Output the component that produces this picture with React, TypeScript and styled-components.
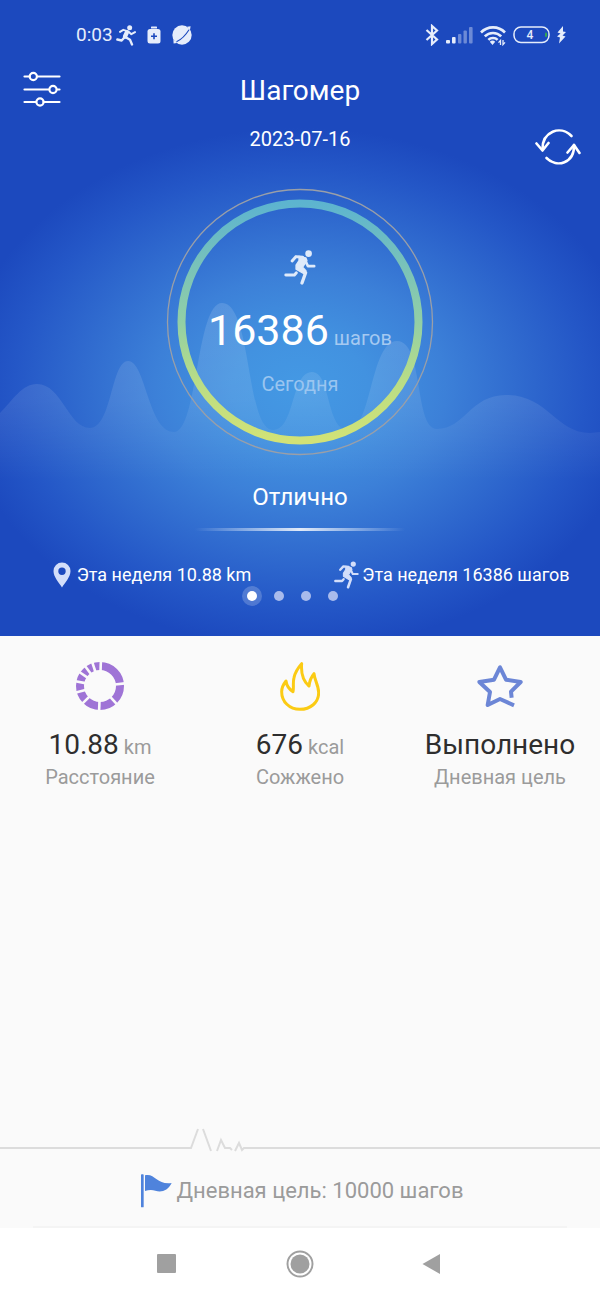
import React from 'react';
import styled, { createGlobalStyle } from 'styled-components';

const GlobalStyle = createGlobalStyle`
  * { box-sizing: border-box; }
  body { margin: 0; background: #fafafa; font-family: Roboto, sans-serif; }
  button { border: 0; padding: 0; background: none; color: inherit; font: inherit; cursor: pointer; }
  svg { display: block; flex: none; }
`;

const Screen = styled.main`
  min-height: 100vh;
  display: flex;
  flex-direction: column;
  background: #fafafa;
`;

const Hero = styled.section`
  position: relative;
  isolation: isolate;
  display: flex;
  flex-direction: column;
  color: #fff;
  padding-bottom: 30px;
  background: radial-gradient(
    ellipse 340px 260px at 50% 388px,
    #4499e4 0,
    #4292e0 20%,
    #3c80d8 43%,
    #306bcf 64%,
    #2457c7 84%,
    #1c49be 100%
  );
`;

const Waves = styled.svg`
  position: absolute;
  z-index: -1;
  left: 0;
  top: 290px;
  width: 100%;
  height: 190px;
`;

const StatusBar = styled.div`
  height: 70px;
  padding: 0 34px 0 76px;
  display: flex;
  justify-content: space-between;
  align-items: center;
  color: #e6edfb;
`;

const StatusGroup = styled.div<{ $gap: number }>`
  display: flex;
  align-items: center;
  gap: ${(p) => p.$gap}px;
`;

const Clock = styled.time`
  font-size: 19px;
  line-height: 24px;
  margin-right: -8px;
`;

const TitleRow = styled.header`
  display: grid;
  grid-template-columns: 60px 1fr 60px;
  align-items: center;
  height: 42px;
  padding: 0 20px;
`;

const Title = styled.h1`
  margin: 0;
  font-size: 28px;
  line-height: 32px;
  font-weight: 400;
  text-align: center;
`;

const DateRow = styled.div`
  display: grid;
  grid-template-columns: 60px 1fr 60px;
  height: 54px;
  padding: 0 20px;
  align-items: center;
`;

const DateText = styled.time`
  grid-column: 2;
  text-align: center;
  font-size: 20px;
  line-height: 24px;
`;

const IconButton = styled.button<{ $end?: boolean }>`
  display: flex;
  width: 44px;
  height: 38px;
  align-items: center;
  justify-content: center;
  justify-self: ${(p) => (p.$end ? 'end' : 'start')};
  align-self: ${(p) => (p.$end ? 'end' : 'start')};
`;

const Dial = styled.div`
  display: grid;
  justify-items: center;
  margin-top: 22px;

  > * { grid-area: 1 / 1; }
`;

const DialContent = styled.div`
  display: flex;
  flex-direction: column;
  align-items: center;
  padding-top: 62px;
`;

const Steps = styled.p`
  margin: 21px 0 0;
  font-size: 43px;
  line-height: 48px;
`;

const StepsUnit = styled.span`
  font-size: 20px;
  line-height: 24px;
  margin-left: 5px;
  color: #a5c9f1;
`;

const Today = styled.p`
  margin: 18px 0 0;
  font-size: 20px;
  line-height: 24px;
  color: #9ac5f0;
`;

const Rating = styled.p`
  margin: 26px 0 0;
  text-align: center;
  font-size: 24px;
  line-height: 30px;
`;

const Glow = styled.div`
  align-self: center;
  width: 210px;
  height: 3px;
  margin-top: 16px;
  background: linear-gradient(90deg, transparent, rgba(255, 255, 255, 0.85) 50%, transparent);
`;

const WeekRow = styled.div`
  display: grid;
  grid-template-columns: 1fr 1fr;
  height: 24px;
  margin-top: 30px;
`;

const WeekItem = styled.div<{ $gap: number }>`
  display: flex;
  align-items: center;
  justify-content: center;
  gap: ${(p) => p.$gap}px;
  padding-left: 4px;
  font-size: 18px;
  line-height: 24px;
  white-space: nowrap;
`;

const Dots = styled.nav`
  display: flex;
  justify-content: center;
  gap: 7px;
  margin-top: 1px;
  padding-right: 16px;
`;

const Dot = styled.button<{ $active?: boolean }>`
  width: 20px;
  height: 20px;
  display: grid;
  place-items: center;
  border-radius: 50%;
  background: ${(p) => (p.$active ? 'rgba(255, 255, 255, 0.2)' : 'none')};

  &::before {
    content: '';
    width: 10px;
    height: 10px;
    border-radius: 50%;
    background: ${(p) => (p.$active ? '#fff' : '#a9bbec')};
  }
`;

const Metrics = styled.section`
  display: grid;
  grid-template-columns: repeat(3, 1fr);
  padding-top: 25px;
`;

const Metric = styled.div`
  display: flex;
  flex-direction: column;
  align-items: center;
  white-space: nowrap;
`;

const MetricIcon = styled.div`
  height: 50px;
  display: flex;
  align-items: center;
`;

const MetricValue = styled.p`
  margin: 18px 0 0;
  font-size: 28px;
  line-height: 32px;
  color: #2e2e2e;
`;

const MetricUnit = styled.span`
  font-size: 20px;
  line-height: 24px;
  color: #9b9b9b;
`;

const MetricLabel = styled.p`
  margin: 4px 0 0;
  font-size: 20px;
  line-height: 24px;
  color: #9b9b9b;
`;

const Pulse = styled.div`
  display: flex;
  margin-top: auto;
`;

const PulseLine = styled.div<{ $grow: number }>`
  flex: ${(p) => p.$grow} 1 0;
  height: 2px;
  margin-top: 19px;
  background: #dcdcdc;
`;

const Goal = styled.footer`
  display: flex;
  align-items: center;
  justify-content: center;
  gap: 4px;
  height: 74px;
  padding: 3px 0 0 4px;
  font-size: 22px;
  line-height: 26px;
  color: #9b9b9b;
`;

const Divider = styled.div`
  height: 2px;
  margin: 0 33px;
  background: #f4f4f4;
`;

const NavBar = styled.nav`
  height: 71px;
  display: grid;
  grid-template-columns: 1fr 1fr 1fr;
  align-items: center;
  padding: 0 100px;
  background: #fff;
`;

const NavButton = styled.button`
  display: grid;
  place-items: center;
  height: 48px;
`;

const Runner = ({ width, height, color }: { width: number; height: number; color: string }) => (
  <svg width={width} height={height} viewBox="0 0 96 106" fill="none" stroke={color} strokeLinecap="round" strokeLinejoin="round">
    <circle cx="74" cy="11" r="10" fill={color} stroke="none" />
    <path d="M24 33 36 20 56 22" strokeWidth="9" />
    <path d="M45 19 66 24 69 32 56 52 66 63 60 72 36 58 36 46 45 32Z" fill={color} strokeWidth="4" />
    <path d="M63 30 72 49 91 49" strokeWidth="8" />
    <path d="M56 61 65 69 54 100" strokeWidth="10" />
    <path d="M37 69 31 76 5 76" strokeWidth="9" />
  </svg>
);

const SprintIcon = () => (
  <svg width="20" height="21" viewBox="0 0 60 62" fill="none" stroke="currentColor" strokeLinecap="round" strokeLinejoin="round">
    <circle cx="41" cy="8" r="7.500" fill="currentColor" stroke="none" />
    <path d="M12 20 22 14 34 18" strokeWidth="6" />
    <path d="M33 21 27 34" strokeWidth="13" />
    <path d="M37 19 46 27 57 21" strokeWidth="6" />
    <path d="M29 36 42 44 48 58" strokeWidth="7" />
    <path d="M25 37 17 46 4 43" strokeWidth="7" />
  </svg>
);

const BatteryPlusIcon = () => (
  <svg width="14" height="18" viewBox="0 0 14 18">
    <rect x="4" y="0.500" width="6" height="2" rx="0.600" fill="currentColor" />
    <rect x="0.500" y="3" width="13" height="14.500" rx="2.500" fill="currentColor" />
    <path d="M7 7.200v6M4 10.200h6" stroke="#1c49be" strokeWidth="1.600" />
  </svg>
);

const PlanetIcon = () => (
  <svg width="20" height="20" viewBox="0 0 20 20">
    <circle cx="10" cy="10" r="9.700" fill="currentColor" />
    <path d="M15 1.800 18.600 1.200 18 5ZM1.400 14.500 1.600 18.500 5 18Z" fill="currentColor" />
    <path d="M4.500 16.800C9.500 14.500 13.500 10.500 17 4.800" fill="none" stroke="#1c49be" strokeWidth="1.100" />
  </svg>
);

const BluetoothIcon = () => (
  <svg width="14" height="22" viewBox="0 0 14 22" fill="none" stroke="currentColor" strokeWidth="2.200">
    <path d="M1.500 6 12 15.500 7 20V2l5 4.500L1.500 16" />
  </svg>
);

const SignalIcon = () => (
  <svg width="27" height="18" viewBox="0 0 27 18" fill="currentColor">
    <rect x="0" y="14" width="4" height="3.500" rx="1" />
    <rect x="6" y="11" width="3.600" height="6.500" rx="1" />
    <g opacity="0.4">
      <rect x="12" y="8" width="3.400" height="9.500" rx="1" />
      <rect x="17.500" y="4.500" width="3.400" height="13" rx="1" />
      <rect x="23" y="1" width="3.600" height="16.500" rx="1" />
    </g>
  </svg>
);

const WifiIcon = () => (
  <svg width="26" height="21" viewBox="0 0 26 21" fill="none" stroke="currentColor" strokeWidth="2.600">
    <path d="M1 7.500C7.500 0.700 18.500 0.700 25 7.500" />
    <path d="M4.800 11.400C9.300 6.800 16.700 6.800 21.200 11.400" />
    <path d="M8.400 14.800C10.800 12.300 15.200 12.300 17.600 14.800" />
    <path d="M9.800 16.800a4 4 0 0 1 5.400 0L12.500 20Z" fill="currentColor" stroke="none" />
    <path d="M20.500 20v-4.600l-2 2.200M23 15v4.600l2-2.200" strokeWidth="1.300" />
  </svg>
);

const BatteryIcon = () => (
  <svg width="37" height="18" viewBox="0 0 37 18">
    <rect x="1" y="1" width="35" height="15.500" rx="7" fill="none" stroke="currentColor" strokeWidth="1.500" />
    <path d="M33 7.500v2.500" stroke="#35a853" strokeWidth="2" strokeLinecap="round" />
    <text x="17" y="13" textAnchor="middle" fontSize="12" fontWeight="500" fontFamily="Roboto, sans-serif" fill="currentColor">4</text>
  </svg>
);

const BoltIcon = () => (
  <svg width="9" height="18" viewBox="0 0 9 18">
    <path d="M6 0 0.500 6.500 3.500 7.500 0 10.500 3 11.500 2 17.500 8.500 10.500 5.500 9.500 9 6 6 5.500Z" fill="currentColor" />
  </svg>
);

const SlidersIcon = () => (
  <svg width="38" height="36" viewBox="0 0 38 36" fill="none" stroke="#fff" strokeWidth="2.200" strokeLinecap="round">
    <path d="M1.500 5.500h5M14 5.500h22.500M1.500 18.500h24M34 18.500h2.500M1.500 31h11.500M20.500 31H36.500" />
    <circle cx="10.300" cy="5.500" r="3.600" />
    <circle cx="30" cy="18.500" r="3.600" />
    <circle cx="17" cy="31" r="3.600" />
  </svg>
);

const SyncIcon = () => (
  <svg width="46" height="38" viewBox="0 0 46 38" fill="none" stroke="#fff" strokeWidth="2.600" strokeLinecap="round" strokeLinejoin="round">
    <path d="M7.500 21C7.500 4 25 -3.500 36.500 8" />
    <path d="M1.500 15.500 7.500 22.500 13.500 15" />
    <path d="M11.500 30C22 40.500 39.500 35 39 17" />
    <path d="M32.500 24.500 39 17 44.500 25" />
  </svg>
);

const PinIcon = () => (
  <svg width="18" height="26" viewBox="0 0 18 26">
    <path d="M9 0.500a8.500 8.500 0 0 1 8.500 8.500C17.500 15 12 20.500 9 25.500 6 20.500 0.500 15 0.500 9A8.500 8.500 0 0 1 9 0.500Zm0 5a3.700 3.700 0 1 0 0 7.400 3.700 3.700 0 0 0 0-7.400Z" fill="#d3defa" />
  </svg>
);

const RingIcon = () => {
  const cuts = [2, 84, 137, 182, 225, 255, 281, 304, 323, 342];
  return (
    <svg width="50" height="50" viewBox="0 0 50 50">
      <circle cx="25" cy="25" r="20" fill="none" stroke="#9f74d6" strokeWidth="8" />
      {cuts.map((a) => (
        <path key={a} d="M25 10V0" stroke="#fafafa" strokeWidth="2.600" transform={`rotate(${a} 25 25)`} />
      ))}
    </svg>
  );
};

const FlameIcon = () => (
  <svg width="40" height="50" viewBox="0 0 120 150" fill="none" stroke="#fbcb14" strokeWidth="9" strokeLinejoin="round">
    <path d="M65 8C62 42 72 62 87 75 89 58 95 46 102 38 104 60 116 72 116 95 116 125 91 145 60 145 28 145 5 122 5 92 5 80 10 70 18 60 20 75 28 85 39 92 42 80 38 65 42 50 46 30 56 18 65 8Z" />
  </svg>
);

const StarIcon = () => (
  <svg width="46" height="44" viewBox="0 0 138 132" fill="none" stroke="#6c86d6" strokeWidth="12" strokeLinejoin="round">
    <path d="M104 101 102 83 131 54 87 47 69 10 51 47 7 54 39 84 32 123 69 105 111 124" />
  </svg>
);

const FlagIcon = () => (
  <svg width="32" height="34" viewBox="0 0 96 102" fill="#4f83dc">
    <rect x="3" y="1" width="8" height="99" rx="2" />
    <path d="M15 4C44-4 52 34 95 27 84 50 64 56 46 50 34 46 25 48 15 51Z" />
  </svg>
);

const metrics = [
  { label: 'Расстояние', value: '10.88', unit: 'km', icon: <RingIcon /> },
  { label: 'Сожжено', value: '676', unit: 'kcal', icon: <FlameIcon /> },
  { label: 'Дневная цель', value: 'Выполнено', unit: '', icon: <StarIcon /> },
];

export default function App() {
  return (
    <Screen>
      <GlobalStyle />
      <Hero>
        <Waves viewBox="0 0 600 190" preserveAspectRatio="none" aria-hidden="true">
          <defs>
            <linearGradient id="wave" x1="0" y1="0" x2="0" y2="1">
              <stop offset="0" stopColor="#fff" stopOpacity="0.13" />
              <stop offset="0.55" stopColor="#fff" stopOpacity="0.09" />
              <stop offset="1" stopColor="#fff" stopOpacity="0" />
            </linearGradient>
          </defs>
          <path
            fill="url(#wave)"
            d="M0 123C13 110 22 94 37 94 62 94 68 138 90 138 112 138 111 71 128 71 146 71 148 142 174 142 198 142 196 13 222 13 252 13 246 140 273 140 295 140 291 82 312 82 331 82 326 140 348 140 372 140 370 51 397 51 424 51 414 139 437 139 465 139 470 105 506 105 548 105 556 143 590 143L600 142V190H0Z"
          />
        </Waves>
        <StatusBar>
          <StatusGroup $gap={11}>
            <Clock>0:03</Clock>
            <SprintIcon />
            <BatteryPlusIcon />
            <PlanetIcon />
          </StatusGroup>
          <StatusGroup $gap={7}>
            <BluetoothIcon />
            <SignalIcon />
            <WifiIcon />
            <BatteryIcon />
            <BoltIcon />
          </StatusGroup>
        </StatusBar>
        <TitleRow>
          <IconButton aria-label="Настройки"><SlidersIcon /></IconButton>
          <Title>Шагомер</Title>
        </TitleRow>
        <DateRow>
          <DateText>2023-07-16</DateText>
          <IconButton $end aria-label="Обновить"><SyncIcon /></IconButton>
        </DateRow>
        <Dial>
          <svg width="268" height="268" viewBox="0 0 268 268" fill="none" aria-hidden="true">
            <defs>
              <linearGradient id="ring" x1="0" y1="0" x2="0" y2="1">
                <stop offset="0" stopColor="#5db4cf" />
                <stop offset="0.5" stopColor="#92cfa6" />
                <stop offset="0.75" stopColor="#b9dd86" />
                <stop offset="1" stopColor="#d2e276" />
              </linearGradient>
            </defs>
            <circle cx="134" cy="134" r="132.500" stroke="#9a9fa8" strokeWidth="1.300" />
            <circle cx="134" cy="134" r="118.500" stroke="url(#ring)" strokeWidth="8" />
          </svg>
          <DialContent>
            <Runner width={32} height={35} color="#dfeafa" />
            <Steps>16386<StepsUnit>шагов</StepsUnit></Steps>
            <Today>Сегодня</Today>
          </DialContent>
        </Dial>
        <Rating>Отлично</Rating>
        <Glow />
        <WeekRow>
          <WeekItem $gap={6}><PinIcon />Эта неделя 10.88 km</WeekItem>
          <WeekItem $gap={3}><Runner width={25} height={28} color="#d3defa" />Эта неделя 16386 шагов</WeekItem>
        </WeekRow>
        <Dots aria-label="Страницы">
          {[1, 2, 3, 4].map((n) => (
            <Dot key={n} $active={n === 1} aria-label={`Страница ${n}`} />
          ))}
        </Dots>
      </Hero>
      <Metrics>
        {metrics.map((m) => (
          <Metric key={m.label}>
            <MetricIcon>{m.icon}</MetricIcon>
            <MetricValue>
              {m.value}
              {m.unit && <MetricUnit> {m.unit}</MetricUnit>}
            </MetricValue>
            <MetricLabel>{m.label}</MetricLabel>
          </Metric>
        ))}
      </Metrics>
      <Pulse aria-hidden="true">
        <PulseLine $grow={190} />
        <svg width="56" height="24" viewBox="0 0 56 24" fill="none" stroke="#dcdcdc" strokeWidth="2">
          <path d="M0 20H1L8 1M13 1 21 23M27 23 31 12 35 20H40L42 22M45 23 49 15 52 22 54 20H56" />
        </svg>
        <PulseLine $grow={354} />
      </Pulse>
      <Goal><FlagIcon />Дневная цель: 10000 шагов</Goal>
      <Divider />
      <NavBar aria-label="Система">
        <NavButton aria-label="Недавние">
          <svg width="19" height="19" viewBox="0 0 19 19"><rect width="19" height="19" rx="1" fill="#a0a0a0" /></svg>
        </NavButton>
        <NavButton aria-label="Домой">
          <svg width="28" height="28" viewBox="0 0 28 28">
            <circle cx="14" cy="14" r="12.500" fill="none" stroke="#a0a0a0" strokeWidth="2" />
            <circle cx="14" cy="14" r="9.500" fill="#a0a0a0" />
          </svg>
        </NavButton>
        <NavButton aria-label="Назад">
          <svg width="22" height="20" viewBox="0 0 22 20"><path d="M0.500 10 18 0V20Z" fill="#a0a0a0" /></svg>
        </NavButton>
      </NavBar>
    </Screen>
  );
}
